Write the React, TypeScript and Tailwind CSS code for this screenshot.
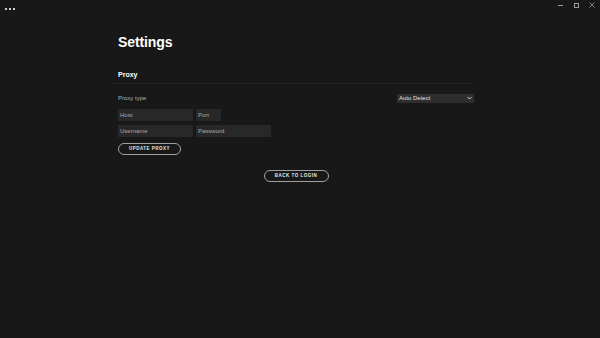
import React from "react";

export default function App() {
  return (
    <div className="w-[600px] h-[338px] bg-[#181818] text-white overflow-hidden" style={{ fontFamily: "'Liberation Sans', Arial, sans-serif" }}>
      <div className="flex items-center justify-between h-[16px]">
        <div className="flex gap-[2px] pl-[5px] pt-[1px]">
          <div className="w-[2px] h-[2px] bg-[#cfcfcf]" />
          <div className="w-[2px] h-[2px] bg-[#cfcfcf]" />
          <div className="w-[2px] h-[2px] bg-[#cfcfcf]" />
        </div>
        <div className="flex items-center h-[10px] self-start">
          <div className="w-[16px] flex justify-center"><div className="w-[5px] h-px bg-[#9a9a9a]" /></div>
          <div className="w-[16px] flex justify-center"><div className="w-[5px] h-[5px] border border-[#9a9a9a]" /></div>
          <div className="w-[16px] flex justify-center">
            <svg width="6" height="6" viewBox="0 0 6 6"><path d="M0.5 0.5L5.5 5.5M5.5 0.5L0.5 5.5" stroke="#9a9a9a" strokeWidth="0.8" /></svg>
          </div>
        </div>
      </div>
      <div className="ml-[118px] w-[355px] flex flex-col">
        <div className="mt-[17px] text-[14px] leading-[18px] font-bold tracking-[-0.1px]">Settings</div>
        <div className="mt-[19px] text-[7px] leading-[9px] font-bold">Proxy</div>
        <div className="-ml-[6px] mt-[4px] w-[360px] h-px bg-[#222222]" />
        <div className="mt-[9px] flex items-center justify-between">
          <div className="text-[6px] text-[#b3b3b3] mt-[1px]">Proxy type</div>
          <div className="w-[77px] h-[9px] bg-[#2e2e2e] flex items-center justify-between px-[2px] mr-[-1px]">
            <span className="text-[6px] text-[#e0e0e0]">Auto Detect</span>
            <svg width="5" height="4" viewBox="0 0 5 4"><path d="M0.5 1L2.5 3L4.5 1" stroke="#e0e0e0" strokeWidth="0.9" fill="none" /></svg>
          </div>
        </div>
        <div className="mt-[6px] flex gap-[3px]">
          <div className="w-[75px] h-[12px] bg-[#282828] flex items-center px-[2px] text-[6px] text-[#a8a8a8]">Host</div>
          <div className="w-[25px] h-[12px] bg-[#282828] flex items-center px-[2px] text-[6px] text-[#a8a8a8]">Port</div>
        </div>
        <div className="mt-[4px] flex gap-[3px]">
          <div className="w-[75px] h-[12px] bg-[#282828] flex items-center px-[2px] text-[6px] text-[#a8a8a8]">Username</div>
          <div className="w-[75px] h-[12px] bg-[#282828] flex items-center px-[2px] text-[6px] text-[#a8a8a8]">Password</div>
        </div>
        <div className="mt-[6px] w-[63px] h-[12px] rounded-full border border-[#a0a0a0] flex items-center justify-center text-[4.5px] font-bold tracking-[0.5px] text-[#e8e8e8]">UPDATE PROXY</div>
        <div className="mt-[15px] self-center mr-[-1px] w-[65px] h-[12px] rounded-full border border-[#a0a0a0] flex items-center justify-center text-[4.5px] font-bold tracking-[0.5px] text-[#e8e8e8]">BACK TO LOGIN</div>
      </div>
    </div>
  );
}
